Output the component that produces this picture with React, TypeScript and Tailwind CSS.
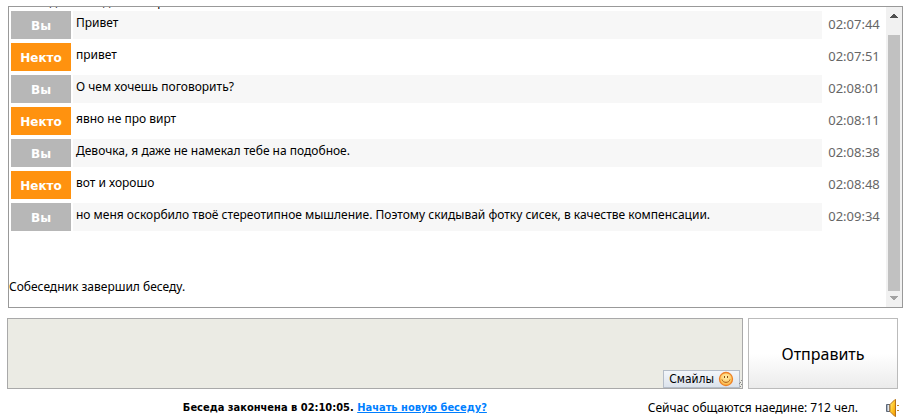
import React, { useState } from 'react';

type Message = {
  author: 'me' | 'stranger';
  text: string;
  time: string;
};

const messages: Message[] = [
  { author: 'me', text: 'Привет', time: '02:07:44' },
  { author: 'stranger', text: 'привет', time: '02:07:51' },
  { author: 'me', text: 'О чем хочешь поговорить?', time: '02:08:01' },
  { author: 'stranger', text: 'явно не про вирт', time: '02:08:11' },
  { author: 'me', text: 'Девочка, я даже не намекал тебе на подобное.', time: '02:08:38' },
  { author: 'stranger', text: 'вот и хорошо', time: '02:08:48' },
  {
    author: 'me',
    text: 'но меня оскорбило твоё стереотипное мышление. Поэтому скидывай фотку сисек, в качестве компенсации.',
    time: '02:09:34',
  },
];

const MessageRow: React.FC<{ message: Message }> = ({ message }) => {
  const isMe = message.author === 'me';

  return (
    <li className="flex h-7 gap-0.5">
      <div
        className={`w-[60px] shrink-0 pt-px text-center font-['DejaVu_Sans',sans-serif] text-[12px] leading-7 font-bold text-white ${
          isMe ? 'bg-[#b7b7b7]' : 'bg-[#ff920f]'
        }`}
      >
        {isMe ? 'Вы' : 'Некто'}
      </div>
      <div className={`min-w-0 flex-1 px-[3px] leading-6 ${isMe ? 'bg-[#f7f7f7]' : 'bg-white'}`}>{message.text}</div>
      <time className="w-[62px] shrink-0 pr-0.5 text-center text-[13px] leading-[26px] text-[#666666]">
        {message.time}
      </time>
    </li>
  );
};

const ScrollBar: React.FC = () => (
  <div className="flex w-4 shrink-0 flex-col items-center bg-[#f1f1f1]" aria-hidden="true">
    <svg width="16" height="28" viewBox="0 0 16 28" shapeRendering="crispEdges">
      <path d="M7 7h2v1h1v1h1v1h1v1H4v-1h1V9h1V8h1z" fill="#505050" />
    </svg>
    <div className="w-3 flex-1 bg-[#c1c1c1]" />
    <svg width="16" height="16" viewBox="0 0 16 16" shapeRendering="crispEdges">
      <path d="M4 5h8v1h-1v1h-1v1H9v1H7V8H6V7H5V6H4z" fill="#a3a3a3" />
    </svg>
  </div>
);

const SmileIcon: React.FC = () => (
  <svg width="16" height="16" viewBox="0 0 16 16">
    <defs>
      <radialGradient id="smile" cx="0.5" cy="0.35" r="0.6">
        <stop offset="0" stopColor="#fff0b0" />
        <stop offset="1" stopColor="#fdbb4a" />
      </radialGradient>
    </defs>
    <circle cx="8" cy="8" r="6.5" fill="url(#smile)" stroke="#ee8126" strokeWidth="1.3" />
    <path d="M6.5 5v2M9.5 5v2" stroke="#8a4a12" />
    <path d="M4 8.5c1 3.8 7 3.8 8 0" fill="none" stroke="#a8591a" />
  </svg>
);

const SpeakerIcon: React.FC = () => (
  <svg width="15" height="18" viewBox="0 0 15 18">
    <defs>
      <linearGradient id="horn" x1="0" y1="0" x2="1" y2="0.8">
        <stop offset="0" stopColor="#fff3a0" />
        <stop offset="0.5" stopColor="#ffcb2e" />
        <stop offset="1" stopColor="#f59a00" />
      </linearGradient>
    </defs>
    <path d="M0.5 5.5h3.5v7h-3.5z" fill="#a9b3c2" stroke="#5d6878" />
    <path d="M2.5 6v6" stroke="#e2e7ee" />
    <path d="M4 5.5l5-5h0.5v17h-0.5l-5-5z" fill="url(#horn)" stroke="#b5731a" />
    <path d="M11 6.5h2M11 11.5h2" stroke="#c08428" />
  </svg>
);

const App: React.FC = () => {
  const [draft, setDraft] = useState('');

  return (
    <main className="bg-white pt-1.5 pr-1.5 pl-2 font-['Noto_Sans',sans-serif] text-[12px] text-black">
      <section className="flex h-[302px] border border-[#999999]">
        <div className="flex min-w-0 flex-1 flex-col justify-end overflow-hidden">
          <p className="leading-4">Собеседник найден. Говорите</p>
          <ul className="flex flex-col gap-1 pt-px pl-0.5">
            {messages.map((message) => (
              <MessageRow key={message.time} message={message} />
            ))}
          </ul>
          <p className="pt-12 pb-3 leading-4">Собеседник завершил беседу.</p>
        </div>
        <ScrollBar />
      </section>

      <form className="mt-2.5 flex gap-[5px] pr-[5px]" onSubmit={(e) => e.preventDefault()}>
        <div className="relative -ml-px min-w-0 flex-1">
          <textarea
            aria-label="Сообщение"
            className="block h-[71px] w-full resize-none border border-[#a9a9a9] bg-[#ebebe4] p-1 outline-none"
            value={draft}
            onChange={(e) => setDraft(e.target.value)}
          />
          <button
            type="button"
            className="absolute right-[3px] bottom-px flex h-[18px] items-center gap-1 border border-[#b5bdc8] bg-linear-to-b from-[#f3f6fa] to-[#dce3ec] px-[5px] font-['DejaVu_Sans_Condensed','DejaVu_Sans',sans-serif]"
          >
            Смайлы
            <SmileIcon />
          </button>
          <svg className="absolute right-px bottom-0.5" width="3" height="7" viewBox="0 0 3 7" shapeRendering="crispEdges">
            <path d="M2 0h1v1H2zM1 2h1v1H1zM0 3h1v1H0zM2 4h1v1H2zM1 6h1v1H1z" fill="#888888" />
          </svg>
        </div>
        <button
          type="submit"
          className="h-[71px] w-[150px] shrink-0 border border-[#bbbbbb] bg-linear-to-b from-white from-50% to-[#ebebeb] text-[16px]"
        >
          Отправить
        </button>
      </form>

      <footer className="flex items-center pt-2.5 pr-0.5">
        <p className="flex-1 pl-3.5 text-center font-['DejaVu_Sans_Condensed','DejaVu_Sans',sans-serif] text-[11px] leading-4 font-bold">
          Беседа закончена в 02:10:05.{' '}
          <a href="#new" className="text-[#007fff] underline">
            Начать новую беседу?
          </a>
        </p>
        <p className="mr-7 leading-4">Сейчас общаются наедине: 712 чел.</p>
        <button type="button" aria-label="Звук">
          <SpeakerIcon />
        </button>
      </footer>
    </main>
  );
};

export default App;
